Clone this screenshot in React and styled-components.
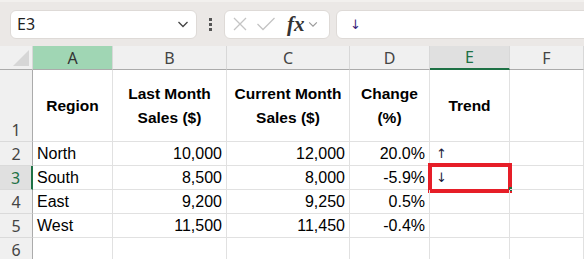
import React from "react";
import styled, { createGlobalStyle, css } from "styled-components";

const GlobalStyle = createGlobalStyle`
    html, body {
        margin: 0;
        padding: 0;
        background: #ffffff;
        overflow: hidden;
    }
    * {
        box-sizing: border-box;
    }
`;

const columns = ["A", "B", "C", "D", "E", "F"];

const rows = [
    { region: "North", last: "10,000", current: "12,000", change: "20.0%", trend: "↑" },
    { region: "South", last: "8,500", current: "8,000", change: "-5.9%", trend: "↓" },
    { region: "East", last: "9,200", current: "9,250", change: "0.5%", trend: "" },
    { region: "West", last: "11,500", current: "11,450", change: "-0.4%", trend: "" },
];

function Chevron({ size = 14, color = "#444" }) {
    return (
        <svg width={size} height={size} viewBox="0 0 14 14">
            <polyline
                points="2.5,5 7,9.5 11.5,5"
                fill="none"
                stroke={color}
                strokeWidth="1.3"
            />
        </svg>
    );
}

export default function App() {
    return (
        <Window>
            <GlobalStyle />
            <Toolbar>
                <NameBox>
                    <span>E3</span>
                    <Chevron />
                </NameBox>
                <Dots>
                    <i />
                    <i />
                    <i />
                </Dots>
                <FxBox>
                    <svg width="16" height="16" viewBox="0 0 16 16">
                        <path d="M2 2 L14 14 M14 2 L2 14" stroke="#c4c4c4" strokeWidth="1.3" />
                    </svg>
                    <svg width="20" height="16" viewBox="0 0 20 16">
                        <polyline points="1.5,8 7,13.5 18.5,2" fill="none" stroke="#c4c4c4" strokeWidth="1.3" />
                    </svg>
                    <Fx>fx</Fx>
                    <Chevron size={12} color="#9a9a9a" />
                </FxBox>
                <FormulaInput>↓</FormulaInput>
            </Toolbar>
            <Sheet>
                <Corner />
                {columns.map((c) => (
                    <ColHead key={c} $state={c === "A" ? "hover" : c === "E" ? "active" : ""}>
                        {c}
                    </ColHead>
                ))}

                <RowHead $bottom>1</RowHead>
                <Cell $head>Region</Cell>
                <Cell $head>Last Month Sales ($)</Cell>
                <Cell $head>Current Month Sales ($)</Cell>
                <Cell $head>Change (%)</Cell>
                <Cell $head>Trend</Cell>
                <Cell />

                {rows.map((r, i) => (
                    <React.Fragment key={r.region}>
                        <RowHead $active={i === 1}>{i + 2}</RowHead>
                        <Cell>{r.region}</Cell>
                        <Cell $right>{r.last}</Cell>
                        <Cell $right>{r.current}</Cell>
                        <Cell $right>{r.change}</Cell>
                        <Cell>
                            <Arrow>{r.trend}</Arrow>
                            {i === 1 && (
                                <>
                                    <Highlight />
                                    <FillHandle />
                                </>
                            )}
                        </Cell>
                        <Cell />
                    </React.Fragment>
                ))}

                <RowHead>6</RowHead>
                <Cell />
                <Cell />
                <Cell />
                <Cell />
                <Cell />
                <Cell />
            </Sheet>
        </Window>
    );
}

const Window = styled.div`
    width: 584px;
    height: 259px;
    overflow: hidden;
    font-family: "Liberation Sans", Arial, sans-serif;
    color: #000;
`;

const Toolbar = styled.div`
    height: 46px;
    display: flex;
    align-items: center;
    padding-left: 10px;
    background: #ebe8e6;
    border-top: 2px solid #f2f0ee;
`;

const boxBase = css`
    height: 29px;
    background: #ffffff;
    border-radius: 6px;
    border: 1px solid #dedad7;
    display: flex;
    align-items: center;
`;

const NameBox = styled.div`
    ${boxBase};
    width: 187px;
    padding: 0 6px 0 6px;
    justify-content: space-between;
    font-family: "Noto Sans", "Open Sans", sans-serif;
    font-size: 16px;
    color: #1f1f1f;
`;

const Dots = styled.div`
    width: 27px;
    display: flex;
    flex-direction: column;
    align-items: center;
    gap: 2px;
    i {
        width: 3px;
        height: 3px;
        background: #555;
    }
`;

const FxBox = styled.div`
    ${boxBase};
    width: 106px;
    padding: 0 4px 0 7px;
    gap: 8px;
`;

const Fx = styled.span`
    font-family: "Liberation Serif", "Times New Roman", serif;
    font-style: italic;
    font-weight: bold;
    font-size: 21px;
    color: #333;
    margin-left: 3px;
    margin-right: -6px;
`;

const FormulaInput = styled.div`
    ${boxBase};
    flex: 1;
    margin-left: 6px;
    margin-right: -10px;
    padding-left: 13px;
    font-family: "DejaVu Sans", sans-serif;
    font-size: 13px;
    color: #3a1f7a;
`;

const Sheet = styled.div`
    display: grid;
    grid-template-columns: 33px 80px 114px 123px 80px 80px 1fr;
    grid-template-rows: 24px 72px repeat(5, 24px);
`;

const Corner = styled.div`
    background: #f0f0f0;
    border-right: 1px solid #d8d8d8;
    border-bottom: 1px solid #ababab;
    position: relative;
    &::after {
        content: "";
        position: absolute;
        right: 3px;
        bottom: 3px;
        border-style: solid;
        border-width: 0 0 16px 16px;
        border-color: transparent transparent #d6d6d6 transparent;
    }
`;

const ColHead = styled.div`
    display: flex;
    align-items: center;
    justify-content: center;
    font-family: "Noto Sans", "Open Sans", sans-serif;
    font-size: 16px;
    color: #444;
    background: #f0f0f0;
    border-right: 1px solid #d8d8d8;
    border-bottom: 1px solid #ababab;
    ${(p) =>
        p.$state === "hover" &&
        css`
            background: #a0d6b4;
            color: #333;
        `}
    ${(p) =>
        p.$state === "active" &&
        css`
            background: #e0e0e0;
            color: #1e7145;
            border-bottom: 2px solid #1e7145;
        `}
`;

const RowHead = styled.div`
    display: flex;
    align-items: ${(p) => (p.$bottom ? "flex-end" : "center")};
    justify-content: center;
    font-family: "Noto Sans", "Open Sans", sans-serif;
    font-size: 16px;
    color: #444;
    background: #f0f0f0;
    border-right: 1px solid #ababab;
    border-bottom: 1px solid #dadada;
    ${(p) =>
        p.$active &&
        css`
            background: #e0e0e0;
            color: #1e7145;
            border-right: 2px solid #1e7145;
        `}
`;

const Cell = styled.div`
    position: relative;
    display: flex;
    align-items: center;
    padding: 0 4px;
    font-size: 16px;
    white-space: nowrap;
    border-right: 1px solid #e1e1e1;
    border-bottom: 1px solid #e1e1e1;
    ${(p) =>
        p.$right &&
        css`
            justify-content: flex-end;
        `}
    ${(p) =>
        p.$head &&
        css`
            justify-content: center;
            text-align: center;
            white-space: normal;
            font-weight: bold;
            font-size: 15.5px;
            line-height: 24px;
            padding: 0 5px;
        `}
`;

const Arrow = styled.span`
    font-family: "DejaVu Sans", sans-serif;
    font-size: 13px;
    color: #1a1a3a;
    padding-left: 2px;
`;

const Highlight = styled.div`
    position: absolute;
    left: -2px;
    top: -3px;
    width: 84px;
    height: 30px;
    border: 4px solid #e61e28;
`;

const FillHandle = styled.div`
    position: absolute;
    right: -3px;
    bottom: -2px;
    width: 3px;
    height: 4px;
    background: #1e7145;
`;
